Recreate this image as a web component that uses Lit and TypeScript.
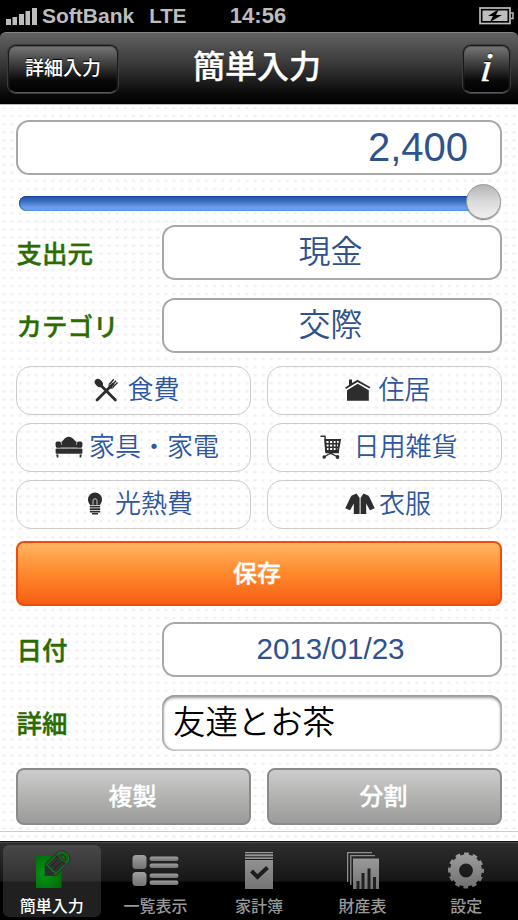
import { LitElement, html, css, svg } from "lit";
import { customElement } from "lit/decorators.js";
import { classMap } from "lit/directives/class-map.js";

const icons = {
  food: svg`<svg width="24" height="24" viewBox="0 0 24 24"><g fill="none" stroke="#2d2d2d" stroke-width="2.8" stroke-linecap="round"><path d="M6 6.5L21.4 22M19 6L3 22"/></g><ellipse cx="4.8" cy="5" rx="3.5" ry="4.6" transform="rotate(-42 4.800 5)" fill="#2d2d2d"/><path d="M15.2 6.500L19.800 1.200M17 8.300L22 2.700M18.600 9.500L23.600 4.500" stroke="#2d2d2d" stroke-width="1.400"/><path d="M14.300 6.200Q14.600 12 19.600 10.200Z" fill="#2d2d2d"/></svg>`,
  sofa: svg`<svg width="28" height="22" viewBox="0 0 28 22" fill="#2d2d2d"><path d="M6.500 11V5.600Q7.200 5.200 8 4.400Q13.500-3 19.800 4.400Q20.400 5.200 21.500 5.600V11Z"/><rect x=".6" y="5.600" width="5.400" height="6" rx="1.600"/><rect x="22" y="5.600" width="5.400" height="6" rx="1.600"/><path d="M1.500 9H26.500V11.600H1.500Z"/><rect x=".6" y="12.500" width="26.800" height="5.300" rx="1"/><path d="M1.200 18.500H3.400V21.500H1.800ZM24.600 18.500H26.800L26.200 21.500H24.600Z"/></svg>`,
  bulb: svg`<svg width="16" height="24" viewBox="0 0 16 24" fill="#2d2d2d"><path d="M8 .500A7 7 0 0 1 15 7.600C15 10 13.700 11.800 12.800 13H3.200C2.200 11.800 1 10 1 7.600A7 7 0 0 1 8 .500Z"/><path d="M6 12.800V8.600Q6 6.800 8 6.800T10 8.600V12.800" fill="none" stroke="#ddd" stroke-width=".9"/><path d="M2.800 13.700H13.200V15.600H2.800ZM2.800 16.200H13.200V18.100H2.800ZM2.800 18.700H13.200V20.600H2.800ZM5 21.100H11V22.500H5Z"/></svg>`,
  house: svg`<svg width="26" height="22" viewBox="0 0 26 22" fill="#2d2d2d"><path d="M0 8.800L4 6V.500H7V4L12.500.700L25.500 8.200L24.400 9.500L12.500 3L1 10Z"/><path d="M2 11.200L12.700 4.800L23.800 11.200V21.800H2Z"/></svg>`,
  cart: svg`<svg width="22" height="24" viewBox="0 0 22 24" fill="none" stroke="#2d2d2d"><path d="M.5 1.300H5L6 17.500H19" stroke-width="1.400"/><path d="M5.300 5H20L18 16H6Z" stroke-width="1.900"/><path d="M9.300 5V16M13 5V16M16.300 5V16M5.300 8.700H19.300M5.500 12.300H18.800" stroke-width="1.500"/><path d="M18 16L8 19.500L5 21.500M8 17L17 21.500" stroke-width="1.300"/><circle cx="4.200" cy="22" r="1.800" fill="#2d2d2d" stroke="none"/><circle cx="17.500" cy="22" r="1.900" fill="#2d2d2d" stroke="none"/></svg>`,
  coat: svg`<svg width="30" height="22" viewBox="0 0 30 22" fill="#2d2d2d"><path d="M8.700 1.800L11.500.500L14.600 5V21H8.800V10.500L5 17.300L.300 15.200L5.500 4.200Q6.500 2.300 8.700 1.800Z"/><path d="M21.300 1.800L18.500.500L15.600 5V21H21.200V10.500L25 17.300L29.700 15.200L24.500 4.200Q23.500 2.300 21.300 1.800Z"/></svg>`,
  pencil: svg`<svg width="36" height="38" viewBox="0 0 36 38" overflow="visible"><defs><radialGradient id="g" cx="35%" cy="55%" r="65%"><stop stop-color="#079819"/><stop offset="1" stop-color="#006d08"/></radialGradient></defs><path d="M2 5H27.500V37H2Z" fill="url(#g)"/><g transform="translate(10.500 25) rotate(-45)"><path d="M2.500 0L9-6.700H25Q31-6.700 31 0T25 6.700H9Z" fill="#2e2e2e" stroke="#2e2e2e" stroke-width="3"/><path d="M9-6.500H25Q31-6.500 31 0T25 6.500H9Q11 4 9 2Q11 0 9-2Q11-4 9-6.500Z" fill="#333" stroke="#087b12" stroke-width="1.300"/><path d="M22-6.200Q25 0 22 6.200M11-2.200H21M11 2.200H21" fill="none" stroke="#272727" stroke-width="1.100"/><ellipse cx="26.500" cy="0" rx="3" ry="5" fill="#303030" stroke="#087b12" stroke-width="1.200"/><ellipse cx="26.500" cy="0" rx=".9" ry="2.400" fill="#087b12"/><circle cx="1.500" cy="0" r="1.500" fill="#14521a"/></g></svg>`,
  list: svg`<svg width="47" height="31" viewBox="0 0 47 31"><defs><linearGradient id="l" x2="0" y2="1"><stop stop-color="#a0a0a0"/><stop offset="1" stop-color="#727272"/></linearGradient></defs><g fill="url(#l)"><rect x="0.500" y="0" width="14" height="14" rx="3.500"/><rect x="0.500" y="17" width="14" height="14" rx="3.500"/><rect x="17.500" y="1.500" width="29" height="4.500" rx="2.200"/><rect x="17.500" y="8.500" width="29" height="4.500" rx="2.200"/><rect x="17.500" y="18.500" width="29" height="4.500" rx="2.200"/><rect x="17.500" y="25.500" width="29" height="4.500" rx="2.200"/></g></svg>`,
  book: svg`<svg width="28" height="37" viewBox="0 0 28 37"><defs><linearGradient id="b" x2="0" y2="1"><stop stop-color="#999"/><stop offset="1" stop-color="#747474"/></linearGradient></defs><path d="M0 0H28V37H0Z" fill="url(#b)"/><path d="M0 1.800H28M0 4.800H28M0 7.500H28" stroke="#1d1d1d" stroke-width="1"/><path d="M6.500 19L12.500 25L22.500 15.500" fill="none" stroke="#1d1d1d" stroke-width="4"/></svg>`,
  charts: svg`<svg width="32" height="37" viewBox="0 0 32 37"><defs><linearGradient id="c" x2="0" y2="1"><stop stop-color="#999"/><stop offset="1" stop-color="#747474"/></linearGradient></defs><path d="M.600 30V.700H25M3.800 33V3.700H28" fill="none" stroke="#8e8e8e" stroke-width="1.300"/><path d="M6 6.500H32V37H6Z" fill="url(#c)"/><path d="M11 37V29M16 37V21M22 37V16.500M27.500 37V25" stroke="#202020" stroke-width="3"/></svg>`,
  gear: svg`<svg width="36" height="37" viewBox="-18 -18.500 36 37"><defs><linearGradient id="s" gradientUnits="userSpaceOnUse" x1="0" y1="-18" x2="0" y2="18"><stop stop-color="#a0a0a0"/><stop offset="1" stop-color="#6e6e6e"/></linearGradient></defs><circle r="11.400" fill="none" stroke="url(#s)" stroke-width="9"/><circle r="16.500" fill="none" stroke="url(#s)" stroke-width="3" stroke-dasharray="4.800 3.839" stroke-dashoffset="2.400"/></svg>`,
};

const categories = [
  { icon: icons.food, name: "食費", gap: "g9" },
  { icon: icons.house, name: "住居", gap: "g7" },
  { icon: icons.sofa, name: "家具・家電", gap: "g6" },
  { icon: icons.cart, name: "日用雑貨", gap: "g11" },
  { icon: icons.bulb, name: "光熱費", gap: "g12" },
  { icon: icons.coat, name: "衣服", gap: "g4" },
];

const tabs = [
  { icon: icons.pencil, name: "簡単入力", active: true },
  { icon: icons.list, name: "一覧表示", active: false },
  { icon: icons.book, name: "家計簿", active: false },
  { icon: icons.charts, name: "財産表", active: false },
  { icon: icons.gear, name: "設定", active: false },
];

@customElement("app-root")
export class AppRoot extends LitElement {
  static styles = css`
    :host {
      display: flex;
      flex-direction: column;
      width: 518px;
      height: 920px;
      overflow: hidden;
      background: #000;
      font-family: "Liberation Sans", "Noto Sans CJK JP", sans-serif;
    }
    * { box-sizing: border-box; }
    svg { display: block; flex: none; }
    .status {
      height: 32px;
      flex: none;
      display: grid;
      grid-template-columns: 1fr auto 1fr;
      align-items: center;
      padding: 0 3px 0 6px;
      color: #bdbdbd;
      font-weight: 700;
      font-size: 21px;
      line-height: 32px;
    }
    .carrier { display: flex; align-items: center; gap: 6px; white-space: nowrap; }
    .carrier span { margin-left: -1px; }
    .carrier .lte { margin-left: 9px; font-size: 20.500px; }
    .time { font-size: 22px; margin-right: 5px; }
    .battery { justify-self: end; }
    .nav {
      height: 72px;
      flex: none;
      display: grid;
      grid-template-columns: 1fr auto 1fr;
      align-items: center;
      padding: 0 8px 0;
      border-radius: 6px 6px 0 0;
      border-top: 1px solid #858585;
      background: linear-gradient(#626262, #343434 48%, #0a0a0a 85%, #000);
      color: #fff;
    }
    .title { font-size: 32px; font-weight: 500; line-height: 40px; text-shadow: 0 -1px 1px #000; -webkit-text-stroke: 0.4px #fff; margin: -3px 4px 0 0; }
    .navbtn {
      height: 48px;
      border-radius: 8px;
      border: 1px solid #181818;
      border-bottom-color: #5a5a5a;
      background: linear-gradient(#777, #3c3c3c 40%, #090909 75%, #000);
      box-shadow: inset 0 1px 1px #555, 0 0 0 1px #3c3c3c;
      display: flex;
      align-items: center;
      justify-content: center;
      font-size: 19px;
      font-weight: 500;
      text-shadow: 0 -1px 1px #000;
    }
    .detail { width: 110px; padding-bottom: 5px; }
    .info { width: 47px; justify-self: end; font: italic 41px "Liberation Serif", serif; -webkit-text-stroke: 0.4px #fff; padding-bottom: 3px; }
    .info span { transform: skewX(-6deg); }
    .page {
      flex: 1;
      min-height: 0;
      border-top: 1px solid #bbb;
      padding: 15px 16px 0;
      background-color: #fff;
      background-image: radial-gradient(ellipse 2.400px 1.800px, #efefef 35%, transparent);
      background-size: 8.100px 8.100px;
      background-position: 0 -1px;
    }
    .field {
      height: 55px;
      border: 2px solid #a8a8a8;
      border-radius: 13px;
      background: #fff;
      color: #2f528e;
      font-size: 32px;
      font-weight: 350;
      display: flex;
      align-items: center;
      justify-content: center;
      padding: 0 3px 7px 0;
    }
    .amount { justify-content: flex-end; font-size: 40px; padding: 0 32px 1px 0; }
    .date { font-size: 29.600px; padding-bottom: 1px; }
    .memo {
      height: 56px;
      color: #000;
      justify-content: flex-start;
      font-size: 32.400px;
      padding: 0 0 7px 11px;
      border: 0;
      box-shadow: inset 0 4px 3px -1px #999, inset 2px 0 2px #aaa, inset -2px 0 2px #aaa, inset 0 -2px 1px #ddd;
    }
    .slider { height: 50px; padding: 21px 2px 0 3px; position: relative; }
    .track {
      height: 15px;
      border-radius: 8px;
      background: linear-gradient(#2051a2, #3c6dc0 35%, #6ca4f0 80%, #5996f2);
      box-shadow: inset 0 1px 1px #1646a0, inset 1px 0 1px #2b62bd;
    }
    .thumb {
      position: absolute;
      right: 1px;
      top: 9px;
      width: 35px;
      height: 35px;
      border-radius: 50%;
      border: 1.500px solid #999;
      background: linear-gradient(#b4b4b4, #dadada 50%, #f0f0f0);
      box-shadow: 0 1px 1px #777;
    }
    .row { display: grid; grid-template-columns: 146px 1fr; align-items: center; }
    .row + .row { margin-top: 18px; }
    .label { color: #2c6b00; font-weight: 500; font-size: 25.500px; padding: 0 0 3px .5px; -webkit-text-stroke: 0.4px #2c6b00; }
    .cats { margin-top: 13px; display: grid; grid-template-columns: 1fr 1fr; gap: 8px 16px; }
    .cat {
      height: 49px;
      border: 1px solid #ccc;
      border-radius: 15px;
      display: flex;
      align-items: center;
      justify-content: center;
      padding: 0 0 1px 7px;
      color: #2f56a0;
      font-size: 26px;
      font-weight: 350;
    }
    .cat span { margin-top: -5px; }
    .g4 { gap: 4px; } .g6 { gap: 6px; } .g7 { gap: 7px; } .g9 { gap: 9px; } .g11 { gap: 11px; padding-left: 9px; } .g12 { gap: 12px; padding-left: 13px; }
    .save {
      height: 65px;
      margin: 12px 0 16px;
      border-radius: 8px;
      border: 2px solid #f44a09;
      background: linear-gradient(#ffb661, #ff882c 50%, #f55f14);
      color: #fff;
      font-size: 24px;
      font-weight: 500;
      -webkit-text-stroke: 0.4px #fff;
      display: flex;
      align-items: center;
      justify-content: center;
      padding: 0 4px 4px 0;
    }
    .actions { display: grid; grid-template-columns: 1fr 1fr; gap: 16px; margin-top: 17px; }
    .action {
      height: 57px;
      border: 2px solid #8b8b8b;
      border-radius: 8px;
      background: linear-gradient(#cdcdcd, #b5b5b4 45%, #9b9b9a);
      color: #fff;
      font-size: 24px;
      font-weight: 500;
      -webkit-text-stroke: 0.3px #fff;
      display: flex;
      align-items: center;
      justify-content: center;
      padding: 0 2px 4px 0;
    }
    .rule { height: 1px; margin: 6px -16px 0; background: #ccc; }
    .tabs {
      height: 79px;
      flex: none;
      display: grid;
      grid-template-columns: repeat(5, 103.600px);
      border-top: 1px solid #111;
      box-shadow: inset 0 1px #494949;
      background: linear-gradient(#2e2e2e, #161616 39px, #000 40px);
      color: #999;
    }
    .tab {
      height: 72px;
      margin: 3px 3px 0;
      border-radius: 6px;
      display: flex;
      flex-direction: column;
      align-items: center;
      font-size: 16px;
      font-weight: 500;
      line-height: 20px;
    }
    .glyph { height: 52px; margin-bottom: 2px; display: flex; align-items: center; }
    .active { background: linear-gradient(#484848, #303030 36px, #202020 37px); color: #fff; }
  `;

  render() {
    return html`
      <div class="status">
        <div class="carrier">
          <svg width="31" height="17" viewBox="0 0 31 17" fill="#bdbdbd"><path d="M0 11H5V17H0ZM6.500 9H11V17H6.500ZM13 6H18V17H13ZM19.500 3H24V17H19.500ZM26 0H31V17H26Z" /></svg>
          <span>SoftBank</span><span class="lte">LTE</span>
        </div>
        <span class="time">14:56</span>
        <svg class="battery" width="36" height="18" viewBox="0 0 36 18"><rect x="1" y="1" width="30" height="15.500" fill="none" stroke="#bdbdbd" stroke-width="1.700" /><rect x="3.500" y="3.500" width="25" height="10.500" fill="#bdbdbd" /><path d="M32 6H34V11.500H32" fill="none" stroke="#bdbdbd" stroke-width="1.500" /><path d="M20 2L9 9H14L11 15L23 8H17Z" fill="#000" /></svg>
      </div>
      <div class="nav">
        <div class="navbtn detail">詳細入力</div>
        <div class="title">簡単入力</div>
        <div class="navbtn info"><span>i</span></div>
      </div>
      <div class="page">
        <div class="field amount">2,400</div>
        <div class="slider"><div class="track"></div><div class="thumb"></div></div>
        <div class="row"><span class="label">支出元</span><div class="field">現金</div></div>
        <div class="row"><span class="label">カテゴリ</span><div class="field">交際</div></div>
        <div class="cats">
          ${categories.map((c) => html`<div class="cat ${c.gap}">${c.icon}<span>${c.name}</span></div>`)}
        </div>
        <div class="save">保存</div>
        <div class="row"><span class="label">日付</span><div class="field date">2013/01/23</div></div>
        <div class="row"><span class="label">詳細</span><div class="field memo">友達とお茶</div></div>
        <div class="actions"><div class="action">複製</div><div class="action">分割</div></div>
        <div class="rule"></div>
      </div>
      <div class="tabs">
        ${tabs.map((t) => html`<div class=${classMap({ tab: true, active: t.active })}><div class="glyph">${t.icon}</div>${t.name}</div>`)}
      </div>
    `;
  }
}
